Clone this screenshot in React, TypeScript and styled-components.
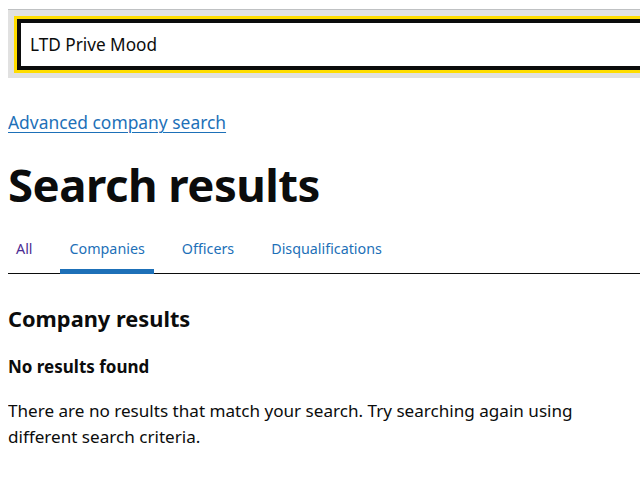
import React from "react";
import styled, { createGlobalStyle } from "styled-components";

const GlobalStyle = createGlobalStyle`
  body {
    margin: 8px 0 8px 8px;
    background: #ffffff;
    font-family: "Noto Sans", Arial, sans-serif;
    color: #0b0c0c;
    overflow-x: hidden;
  }
  * {
    box-sizing: border-box;
  }
`;

const SearchBar = styled.div`
  margin-top: 1px;
  padding: 6px 0 5px 6px;
  background: #e1e1e1;
  border-top: 1px solid #bfc1c3;
`;

const SearchInput = styled.div`
  height: 51px;
  border: 4px solid #0b0c0c;
  border-right: none;
  outline: 3px solid #ffdd00;
  margin: 3px 0 3px 3px;
  background: #ffffff;
  display: flex;
  align-items: center;
  padding-left: 9px;
  font-size: 17.2px;
`;

const AdvancedLink = styled.a`
  display: inline-block;
  margin-top: 32px;
  font-size: 17.4px;
  color: #1d70b8;
  text-decoration: underline;
  text-underline-offset: 3px;
  text-decoration-thickness: 1px;
`;

const Heading = styled.h1`
  margin: 25px 0 0;
  font-size: 45.5px;
  font-weight: 700;
  line-height: 1.1;
  letter-spacing: -0.5px;
`;

const TabList = styled.div`
  display: flex;
  margin-top: 22px;
  border-bottom: 1px solid #0b0c0c;
`;

const Tab = styled.a<{ $active?: boolean; $visited?: boolean }>`
  padding: 8px 9px 11px 10px;
  margin-right: 18px;
  margin-bottom: -1px;
  font-size: 14.3px;
  text-decoration: none;
  color: ${(p) => (p.$visited ? "#4c2c92" : "#1d70b8")};
  border-bottom: 5px solid ${(p) => (p.$active ? "#1d70b8" : "transparent")};

  &:first-child {
    padding-left: 8px;
  }
`;

const SubHeading = styled.h2`
  margin: 30px 0 0;
  font-size: 21.8px;
  font-weight: 700;
`;

const Notice = styled.h3`
  margin: 22px 0 0;
  font-size: 17px;
  font-weight: 700;
`;

const Body = styled.p`
  margin: 20px 0 0;
  font-size: 17.1px;
  line-height: 26px;
  max-width: 600px;
`;

export default function App() {
  return (
    <>
      <GlobalStyle />
      <SearchBar>
        <SearchInput>LTD Prive Mood</SearchInput>
      </SearchBar>
      <AdvancedLink href="#">Advanced company search</AdvancedLink>
      <Heading>Search results</Heading>
      <TabList>
        <Tab href="#" $visited>
          All
        </Tab>
        <Tab href="#" $active>
          Companies
        </Tab>
        <Tab href="#">Officers</Tab>
        <Tab href="#">Disqualifications</Tab>
      </TabList>
      <SubHeading>Company results</SubHeading>
      <Notice>No results found</Notice>
      <Body>
        There are no results that match your search. Try searching again using
        different search criteria.
      </Body>
    </>
  );
}
